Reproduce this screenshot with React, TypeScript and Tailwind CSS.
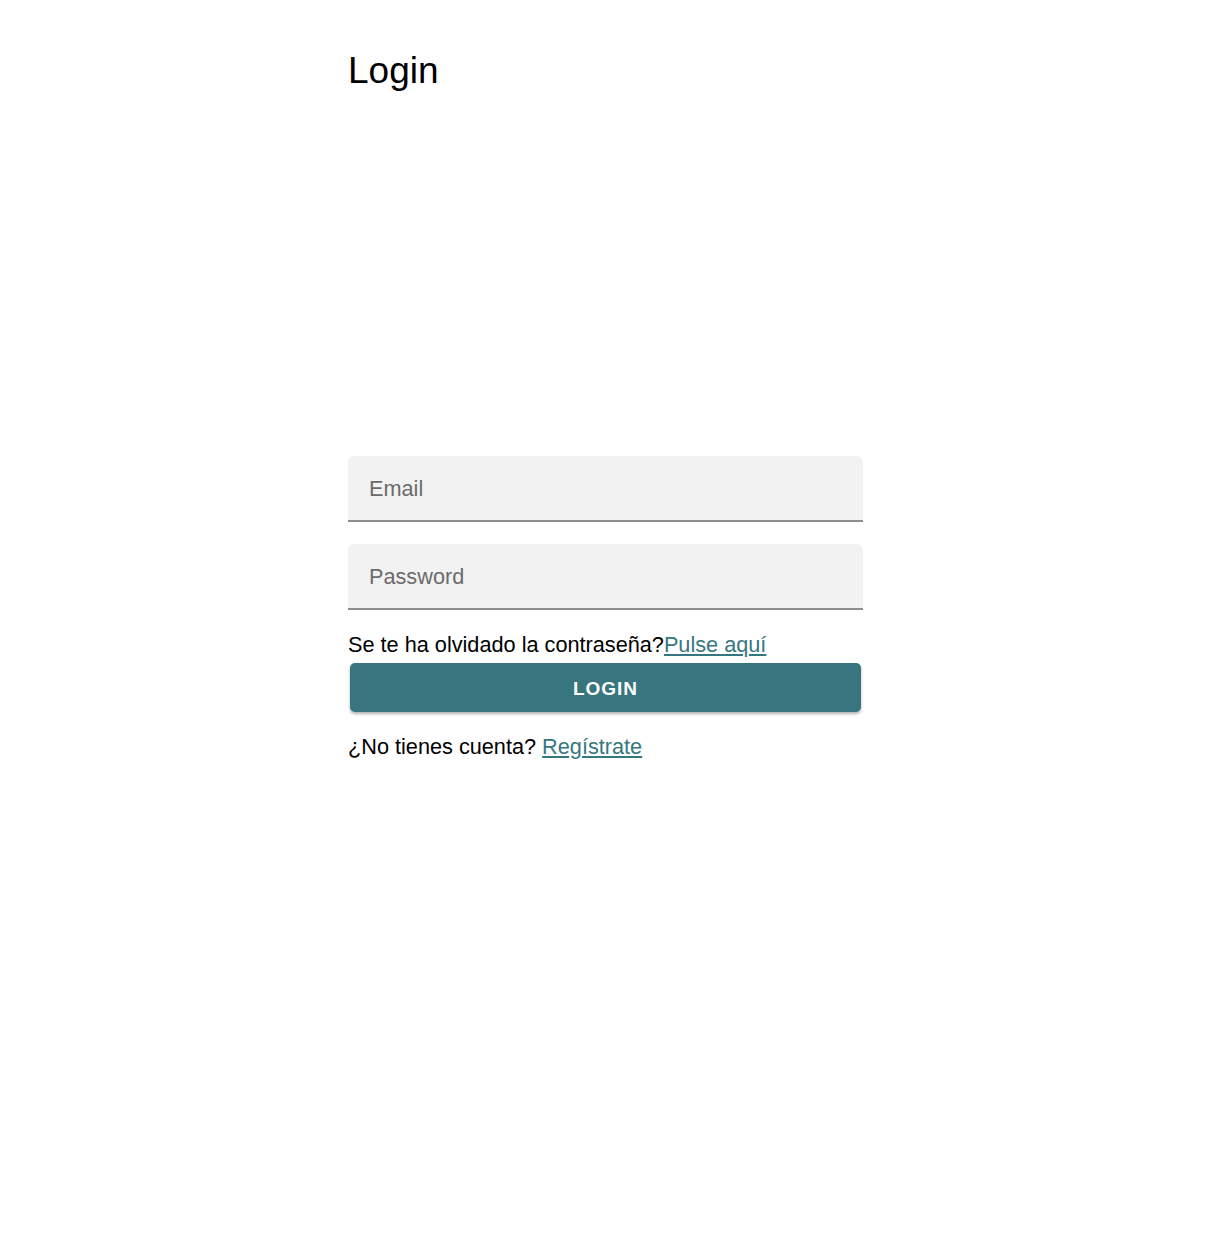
import React, { useState } from 'react';

const App: React.FC = () => {
  const [email, setEmail] = useState('');
  const [password, setPassword] = useState('');

  return (
    <div className="min-h-screen bg-white font-['Liberation_Sans',Arial,sans-serif] text-black">
      <div className="mx-auto w-[515px] pt-[46px]">
        <h1 className="text-[37px] leading-[50px] font-normal">Login</h1>

        <form className="mt-[360px] flex flex-col" onSubmit={e => e.preventDefault()}>
          <input
            type="email"
            value={email}
            onChange={e => setEmail(e.target.value)}
            placeholder="Email"
            className="h-[66px] w-full rounded-t-[6px] border-b-2 border-[#8d8d8d] bg-[#f2f2f2] px-[21px] pt-[2px] text-[21.7px] text-black placeholder:text-[#6b6b6b] outline-none"
          />
          <input
            type="password"
            value={password}
            onChange={e => setPassword(e.target.value)}
            placeholder="Password"
            className="mt-[22px] h-[66px] w-full rounded-t-[6px] border-b-2 border-[#8d8d8d] bg-[#f2f2f2] px-[21px] pt-[2px] text-[21.7px] text-black placeholder:text-[#6b6b6b] outline-none"
          />

          <p className="mt-[20px] text-[21.7px] leading-[30px]">
            Se te ha olvidado la contraseña?<a href="#" className="text-[#357780] underline underline-offset-[2px]">Pulse aquí</a>
          </p>

          <button
            type="submit"
            className="mx-[2px] mt-[3px] h-[49px] rounded-[5px] bg-[#37767f] pt-[3px] text-[19px] font-bold tracking-[0.05em] text-white shadow-[0_2px_3px_rgba(0,0,0,0.3)]"
          >
            LOGIN
          </button>

          <p className="mt-[20px] text-[21.7px] leading-[30px]">
            ¿No tienes cuenta? <a href="#" className="text-[#357780] underline underline-offset-[2px]">Regístrate</a>
          </p>
        </form>
      </div>
    </div>
  );
};

export default App;
